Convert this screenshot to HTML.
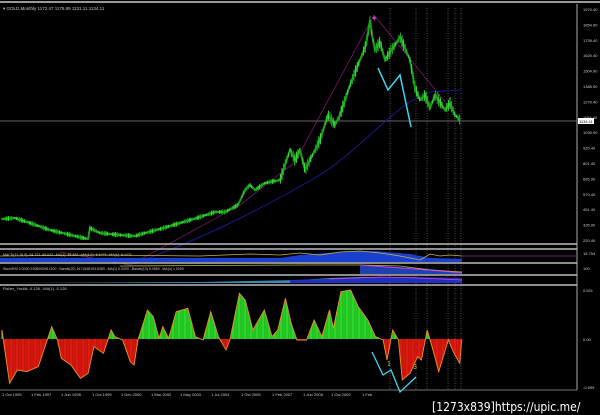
<!DOCTYPE html><html><head><style>
body{margin:0;background:#000;width:600px;height:415px;overflow:hidden;font-family:"Liberation Sans",sans-serif}
svg{display:block}
text{font-family:"Liberation Sans",sans-serif;fill:#ccc}
</style></head><body>
<svg id="s" width="600" height="415" viewBox="0 0 600 415">
<rect width="600" height="415" fill="#000"/>
<line x1="0" y1="2" x2="600" y2="2" stroke="#999" stroke-width="2"/>
<line x1="577" y1="4" x2="577" y2="390" stroke="#aaa"/>
<text x="3" y="10" font-size="4.5">▾ GOLD,Monthly  1172.47 1175.89 1131.11 1134.11</text>
<g font-size="4" id="ax"></g>
<line x1="0" y1="121" x2="577" y2="121" stroke="#888" stroke-width="0.8"/>
<rect x="578" y="118" width="16" height="6" fill="#fff"/><text x="579" y="123" font-size="4" style="fill:#000">1134.11</text>
<g stroke="#aaa" stroke-dasharray="1,1.5" stroke-width="0.5">
<line x1="390" y1="8" x2="390" y2="390"/><line x1="416" y1="8" x2="416" y2="390"/><line x1="427" y1="8" x2="427" y2="390"/><line x1="448" y1="8" x2="448" y2="390"/><line x1="455" y1="8" x2="455" y2="390"/><line x1="461" y1="8" x2="461" y2="390"/></g>
<polyline points="60,252 130,265 240,205 295,162 374,15 460,120" fill="none" stroke="#8a1a7a" stroke-width="0.7"/>
<path d="M130,265 C200,240 260,210 320,175 C360,150 400,100 430,92 L460,90" fill="none" stroke="#1a1a8a" stroke-width="1"/>
<g id="price"></g>
<polyline points="378,68 388,90 400,75 411,127" fill="none" stroke="#3cd8f0" stroke-width="1.5"/>
<text x="371" y="21" font-size="8" style="fill:#e040e0">✦</text>
<line x1="0" y1="244" x2="577" y2="244" stroke="#bbb" stroke-width="1.5"/>
<line x1="0" y1="249" x2="577" y2="249" stroke="#bbb" stroke-width="1.5"/>
<path d="M0,258 L280,258 L300,255 L340,252 L375,251 L410,254 L430,258 L462,259 L462,262 L0,262Z" fill="#1a40d0"/>
<polyline points="0,256 100,255 200,256 250,254 280,255 300,253 320,255 340,252 360,251 380,253 400,256 420,260 430,254 440,256 450,255 462,256" fill="none" stroke="#c8b040" stroke-width="0.8"/>
<text x="3" y="256" font-size="3.5">MACD(12,26,9) -64.122 -66.622 ..MA(1) -64.122 ..MA(1,0) -6.1471 ..MA(1) -6.1471</text>
<line x1="462" y1="256" x2="577" y2="256" stroke="#6a1a6a"/>
<line x1="0" y1="263" x2="577" y2="263" stroke="#bbb" stroke-width="1.5"/>
<path d="M360,265 L420,268 L462,272 L462,274 L360,274Z" fill="#2040b0"/>
<polyline points="120,266 300,265 360,265 400,266 430,270 462,272" fill="none" stroke="#c0b030" stroke-width="0.8"/>
<polyline points="360,265 400,268 440,271 462,273" fill="none" stroke="#e040e0" stroke-width="0.8"/>
<text x="3" y="270" font-size="3.5">StochRSI 0.0000 230609298.1100 ..Bands(20) 1671548193.5353 ..MA(1) 0.0000 ..Bands(13) 5.0959 ..MA(4) 1.0295</text>
<line x1="0" y1="275" x2="577" y2="275" stroke="#bbb" stroke-width="1.5"/>
<path d="M0,283 L200,282 L300,280 L330,278 L360,277 L400,277 L462,278 L462,283 L0,283Z" fill="#3a8ab0"/>
<path d="M290,280 L400,277 L462,278 L462,283 L290,283Z" fill="#2030c0"/>
<polyline points="330,279 380,277 420,278 462,280" fill="none" stroke="#e040e0" stroke-width="0.8"/>
<line x1="0" y1="285" x2="577" y2="285" stroke="#bbb" stroke-width="1.5"/>
<text x="3" y="290" font-size="4">Fisher_Yur4ik -0.128  ..MA(1) -0.128</text>
<g id="fish"></g>
<polyline points="372,352 383,375 391,370 400,392 416,377" fill="none" stroke="#3cd8f0" stroke-width="1.3"/>
<text x="387" y="366" font-size="7" style="fill:#e0c020">1</text>
<text x="413" y="369" font-size="7" style="fill:#e0c020">3</text>
<line x1="0" y1="390" x2="577" y2="390" stroke="#999" stroke-width="0.8"/>
<g id="dates" font-size="4"></g>
<text x="583" y="292" font-size="4">0.631</text><text x="583" y="341" font-size="4">0.00</text><text x="583" y="389" font-size="4">-0.599</text>
<text x="583" y="255" font-size="4">18.754</text><text x="583" y="270" font-size="4">100</text>
<text x="432" y="411" font-size="12" style="fill:#fff;font-family:'DejaVu Sans Condensed','Liberation Sans Narrow',sans-serif">[1273x839]https://upic.me/</text>
</svg>
<script>
var ns="http://www.w3.org/2000/svg";
function el(p,t,a){var e=document.createElementNS(ns,t);for(var k in a)e.setAttribute(k,a[k]);p.appendChild(e);return e;}
var ax=document.getElementById('ax');
var labs=["1970.40","1854.90","1739.40","1620.40","1504.90","1385.90","1270.40","1154.40","1035.90","920.40","801.40","685.90","570.40","451.40","335.90","220.40"];
labs.forEach(function(l,i){el(ax,'text',{x:583,y:11+i*15.4,'font-size':4}).textContent=l;});
var dl=["1 Oct 1995","1 Feb 1997","1 Jun 1998","1 Oct 1999","1 Dec 2000","1 Mar 2002","1 May 2003","1 Jul 2004","1 Oct 2005","1 Feb 2007","1 Jun 2008","1 Oct 2009","1 Feb"];
var dx=[2,31,61,92,121,151,180,211,241,272,303,331,362];
var dg=document.getElementById('dates');
dl.forEach(function(l,i){el(dg,'text',{x:dx[i],y:396}).textContent=l;});
function interp(pts,x){for(var i=0;i<pts.length-1;i++){if(x>=pts[i][0]&&x<=pts[i+1][0]){var t=(x-pts[i][0])/(pts[i+1][0]-pts[i][0]||1);return pts[i][1]+t*(pts[i+1][1]-pts[i][1]);}}return pts[pts.length-1][1];}
var pp=[[2,219],[15,218],[30,223],[50,230],[75,236],[88,239],[90,228],[100,233],[120,235],[135,236],[145,233],[160,229],[180,223],[200,217],[215,212],[225,212],[238,205],[245,190],[250,185],[255,190],[265,183],[280,180],[285,165],[290,150],[295,160],[300,150],[305,170],[310,160],[320,140],[328,115],[335,125],[340,115],[350,85],[360,60],[366,45],[370,20],[372,35],[375,50],[380,42],[385,60],[390,52],[395,45],[400,37],[405,48],[410,60],[415,88],[420,100],[425,95],[430,108],[435,95],[440,102],[445,110],[450,103],[455,115],[460,120]];
var g=document.getElementById('price');
el(g,'polyline',{points:pp.map(function(p){return p.join(',')}).join(' '),fill:'none',stroke:'#1f9a1f','stroke-width':2});
for(var x=2;x<=460;x+=1.6){var y=interp(pp,x);var h=2+Math.abs(Math.sin(x*1.7))*(x>280?10:3);
el(g,'line',{x1:x,y1:y-h/2,x2:x,y2:y+h/2,stroke:(Math.sin(x*3.1)>0?'#3ae03a':'#18b018'),'stroke-width':1});}
var zp=[[5,270],[25,430],[45,390],[70,395],[100,380],[135,260],[150,300],[160,355],[185,375],[210,415],[230,400],[245,320],[270,340],[290,270],[300,290],[320,300],[340,365],[350,375],[360,300],[385,210],[400,230],[415,295],[425,260],[440,295],[460,215],[490,205],[510,290],[530,300],[550,215],[570,290],[590,330],[600,300],[625,160],[640,180],[660,270],[690,210],[710,290],[725,270],[745,175],[760,250],[775,300],[800,300],[820,240],[840,290],[860,210],[870,265],[890,155],[915,150],[935,200],[960,240],[980,290],[1000,300],[1010,360],[1025,270],[1040,300],[1050,420],[1070,400],[1090,350],[1100,360],[1115,270],[1130,330],[1145,395],[1170,300],[1185,340],[1200,370],[1205,300]];
var fp=zp.map(function(p){return [p[0]/2.61,p[1]/3+240];});
var f=document.getElementById('fish');var z=339;
for(var x=2;x<=462;x+=1.2){var y=interp(fp,x);el(f,'line',{x1:x,y1:z,x2:x,y2:y,stroke:y<z?'#2ad82a':'#e01a10','stroke-width':1.2});}
el(f,'polyline',{points:fp.map(function(p){return p.join(',')}).join(' '),fill:'none',stroke:'#f09020','stroke-width':0.9});
</script>
</body></html>
